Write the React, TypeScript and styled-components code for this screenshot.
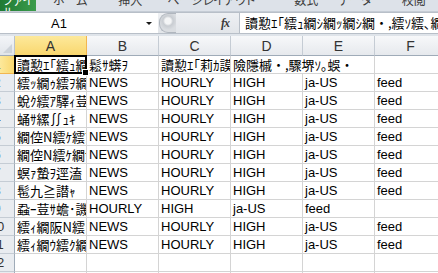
import React from 'react';
import styled, { createGlobalStyle } from 'styled-components';

const GlobalStyle = createGlobalStyle`
  html, body {
    margin: 0;
    padding: 0;
    background: #ffffff;
    overflow: hidden;
  }
  body {
    font-family: "Liberation Sans", "Noto Sans CJK JP", sans-serif;
  }
`;

const Window = styled.div`
  width: 438px;
  height: 273px;
  overflow: hidden;
  background: #dfe4ea;
  display: flex;
  flex-direction: column;
`;

// リボンのタブ列（上半分は画面外）
const TabStrip = styled.div`
  height: 11px;
  flex: none;
  display: flex;
  overflow: hidden;
  background: #dde2e9;
  border-bottom: 1px solid #c5ccd5;
  font-family: "Noto Sans CJK JP", sans-serif;
  font-feature-settings: "palt";
  font-size: 12px;
  line-height: 12px;
  color: #3b3b3b;
`;

const FileTab = styled.div`
  width: 36px;
  flex: none;
  background: linear-gradient(90deg, #1f7a34, #3c9c4c);
  color: #ffffff;
  padding-left: 3px;
  box-sizing: border-box;
  height: 11px;
  overflow: hidden;
  & > span {
    display: block;
    margin-top: -6px;
  }
`;

const Tab = styled.div<{ $gap: number }>`
  flex: none;
  margin-left: ${(p) => p.$gap}px;
  margin-top: -6px;
  white-space: nowrap;
`;

const FormulaRow = styled.div`
  height: 24px;
  flex: none;
  display: flex;
  align-items: flex-start;
  background: #dfe4ea;
`;

const NameBox = styled.div`
  width: 158px;
  height: 22px;
  background: #ffffff;
  border-top: 1px solid #b8bfc8;
  border-bottom: 1px solid #b8bfc8;
  box-sizing: border-box;
  display: flex;
  align-items: center;
`;

const NameText = styled.div`
  width: 118px;
  text-align: center;
  font-size: 13px;
  color: #000;
`;

const DropArrow = styled.div`
  margin-left: 28px;
  width: 0;
  height: 0;
  border-left: 3px solid transparent;
  border-right: 3px solid transparent;
  border-top: 3px solid #1a1a1a;
`;

const FxZone = styled.div`
  width: 82px;
  height: 22px;
  box-sizing: border-box;
  background: linear-gradient(#eef0f3, #e2e5e9);
  border-top: 1px solid #b8bfc8;
  border-bottom: 1px solid #b8bfc8;
  border-right: 1px solid #b8bfc8;
  display: flex;
  align-items: center;
`;

const Grip = styled.div`
  width: 16px;
  height: 18px;
  margin-left: 1px;
  border-radius: 9px 0 0 9px;
  background: radial-gradient(circle at 8px 7px, #f4f5f6 0 3px, #c9cdd2 5px, #dadde1 9px);
  border: 1px solid #b0b6be;
  border-right: none;
`;

const Fx = styled.div`
  margin-left: 45px;
  font-family: "Liberation Serif", serif;
  font-style: italic;
  font-weight: bold;
  font-size: 12px;
  color: #3b3b3b;
  letter-spacing: -1px;
`;

const FormulaInput = styled.div`
  flex: 1;
  height: 22px;
  box-sizing: border-box;
  background: #ffffff;
  border-top: 1px solid #b8bfc8;
  border-bottom: 1px solid #b8bfc8;
  padding-left: 5px;
  font-family: "Noto Sans CJK JP", sans-serif;
  font-size: 13px;
  line-height: 20px;
  white-space: nowrap;
  overflow: hidden;
  color: #000;
`;

const Sheet = styled.div`
  display: grid;
  grid-template-columns: 15px repeat(6, 72px);
  grid-auto-rows: 18px;
  grid-template-rows: 20px;
  background: #ffffff;
`;

const Corner = styled.div`
  position: relative;
  background: linear-gradient(#f3f5f8, #e1e5ea);
  border-right: 1px solid #b9c2cc;
  border-bottom: 1px solid #9fabb8;
  box-sizing: border-box;
  &::after {
    content: "";
    position: absolute;
    right: 2px;
    bottom: 2px;
    border-left: 9px solid transparent;
    border-bottom: 9px solid #cdd3da;
  }
`;

const ColHead = styled.div<{ $active?: boolean }>`
  box-sizing: border-box;
  background: ${(p) =>
    p.$active ? 'linear-gradient(#fde99b, #f9d76f)' : 'linear-gradient(#f7f8fa, #e6e9ed)'};
  border-right: 1px solid ${(p) => (p.$active ? '#f2b650' : '#c5ccd4')};
  border-bottom: 1px solid ${(p) => (p.$active ? '#f2b650' : '#9fabb8')};
  display: flex;
  align-items: center;
  justify-content: center;
  font-size: 14px;
  color: #333;
  padding-top: 1px;
`;

const RowHead = styled.div<{ $active?: boolean }>`
  box-sizing: border-box;
  overflow: hidden;
  background: ${(p) => (p.$active ? 'linear-gradient(90deg, #fde99b, #f9d76f)' : '#e9ecf0')};
  border-right: 1px solid ${(p) => (p.$active ? '#f2b650' : '#9fabb8')};
  border-bottom: 1px solid ${(p) => (p.$active ? '#f2b650' : '#c5ccd4')};
  font-size: 13px;
  line-height: 17px;
  color: #333;
`;

const RowNum = styled.span`
  display: block;
  width: 26px;
  margin-left: -16px;
  text-align: center;
`;

const Cell = styled.div<{ $span?: number; $jp?: boolean }>`
  position: relative;
  box-sizing: border-box;
  grid-column: span ${(p) => p.$span ?? 1};
  border-right: 1px solid #d4d4d4;
  border-bottom: 1px solid #d4d4d4;
  padding-left: 2px;
  font-family: ${(p) =>
    p.$jp ? '"Noto Sans CJK JP", sans-serif' : '"Liberation Sans", "Noto Sans CJK JP", sans-serif'};
  font-size: 13px;
  line-height: 18px;
  white-space: nowrap;
  overflow: hidden;
  color: #000;
`;

const Selected = styled.div`
  position: absolute;
  left: -1px;
  top: -1px;
  right: -1px;
  bottom: -1px;
  border: 2px solid #000;
  pointer-events: none;
`;

const FillHandle = styled.div`
  position: absolute;
  right: -3px;
  bottom: -3px;
  width: 5px;
  height: 5px;
  background: #000;
  border: 1px solid #fff;
  z-index: 2;
`;

const SelectedCellWrap = styled(Cell)`
  overflow: visible;
  z-index: 1;
`;

const Clip = styled.div`
  overflow: hidden;
  width: 100%;
`;

const tabs: [string, number][] = [
  ['ホーム', 17],
  ['挿入', 31],
  ['ページレイアウト', 25],
  ['数式', 39],
  ['データ', 20],
  ['校閲', 30],
  ['表示', 24],
];

const cols = ['A', 'B', 'C', 'D', 'E', 'F'];

const names = [
  '繧ｯ繝ｩ繧ｦ繝・',
  '蛻ｸ繧ｱ驛ｨ荳・ｽ',
  '蛹ｻ縲∬ｭｷ',
  '繝倥Ν繧ｹ繧ｱ繧｢',
  '繝倥Ν繧ｹ繝ｻ繧ｿ',
  '螟ｧ蟄ｦ逕溘・',
  '髢九≧譛ｬ',
  '蝨ｰ荳ｻ蟾･譏・',
  '繧ｨ繝阪Ν繧ｮ繝ｼ',
  '繧ｨ繝ｳ繧ｸ繝ｳ',
];

export default function App() {
  const rows: React.ReactNode[] = [];

  // 1行目（見出し）
  rows.push(
    <RowHead key="h1" $active>
      <RowNum>1</RowNum>
    </RowHead>,
    <SelectedCellWrap key="a1" $jp>
      <Clip>讀懃ｴ｢繧ｭ繝ｼ繝ｯ繝ｼ繝・,繧ｿ繧､繝・</Clip>
      <Selected />
      <FillHandle />
    </SelectedCellWrap>,
    <Cell key="b1" $jp>鬆ｻ蠎ｦ</Cell>,
    <Cell key="c1" $jp>讀懃ｴ｢莉ｶ謨ｰ</Cell>,
    <Cell key="d1" $jp $span={2}>險隱槭・,驟堺ｿ｡蜈・</Cell>,
    <Cell key="f1" />
  );

  names.forEach((name, i) => {
    const n = i + 2;
    const shifted = n === 9;
    const vals = shifted
      ? ['HOURLY', 'HIGH', 'ja-US', 'feed', '']
      : ['NEWS', 'HOURLY', 'HIGH', 'ja-US', 'feed'];
    rows.push(
      <RowHead key={`h${n}`}>
        <RowNum>{n}</RowNum>
      </RowHead>,
      <Cell key={`a${n}`} $jp>
        {name}
      </Cell>,
      ...vals.map((v, j) => <Cell key={`${n}-${j}`}>{v}</Cell>)
    );
  });

  [12, 13].forEach((n) => {
    rows.push(
      <RowHead key={`h${n}`}>
        <RowNum>{n}</RowNum>
      </RowHead>,
      ...cols.map((c) => <Cell key={`${n}${c}`} />)
    );
  });

  return (
    <>
      <GlobalStyle />
      <Window>
        <TabStrip>
          <FileTab>
            <span>ファイル</span>
          </FileTab>
          {tabs.map(([t, g]) => (
            <Tab key={t} $gap={g}>
              {t}
            </Tab>
          ))}
        </TabStrip>
        <FormulaRow>
          <NameBox>
            <NameText>A1</NameText>
            <DropArrow />
          </NameBox>
          <FxZone>
            <Grip />
            <Fx>fx</Fx>
          </FxZone>
          <FormulaInput>讀懃ｴ｢繧ｭ繝ｼ繝ｯ繝ｼ繝・,繧ｿ繧､繝・</FormulaInput>
        </FormulaRow>
        <Sheet>
          <Corner />
          {cols.map((c) => (
            <ColHead key={c} $active={c === 'A'}>
              {c}
            </ColHead>
          ))}
          {rows}
        </Sheet>
      </Window>
    </>
  );
}
